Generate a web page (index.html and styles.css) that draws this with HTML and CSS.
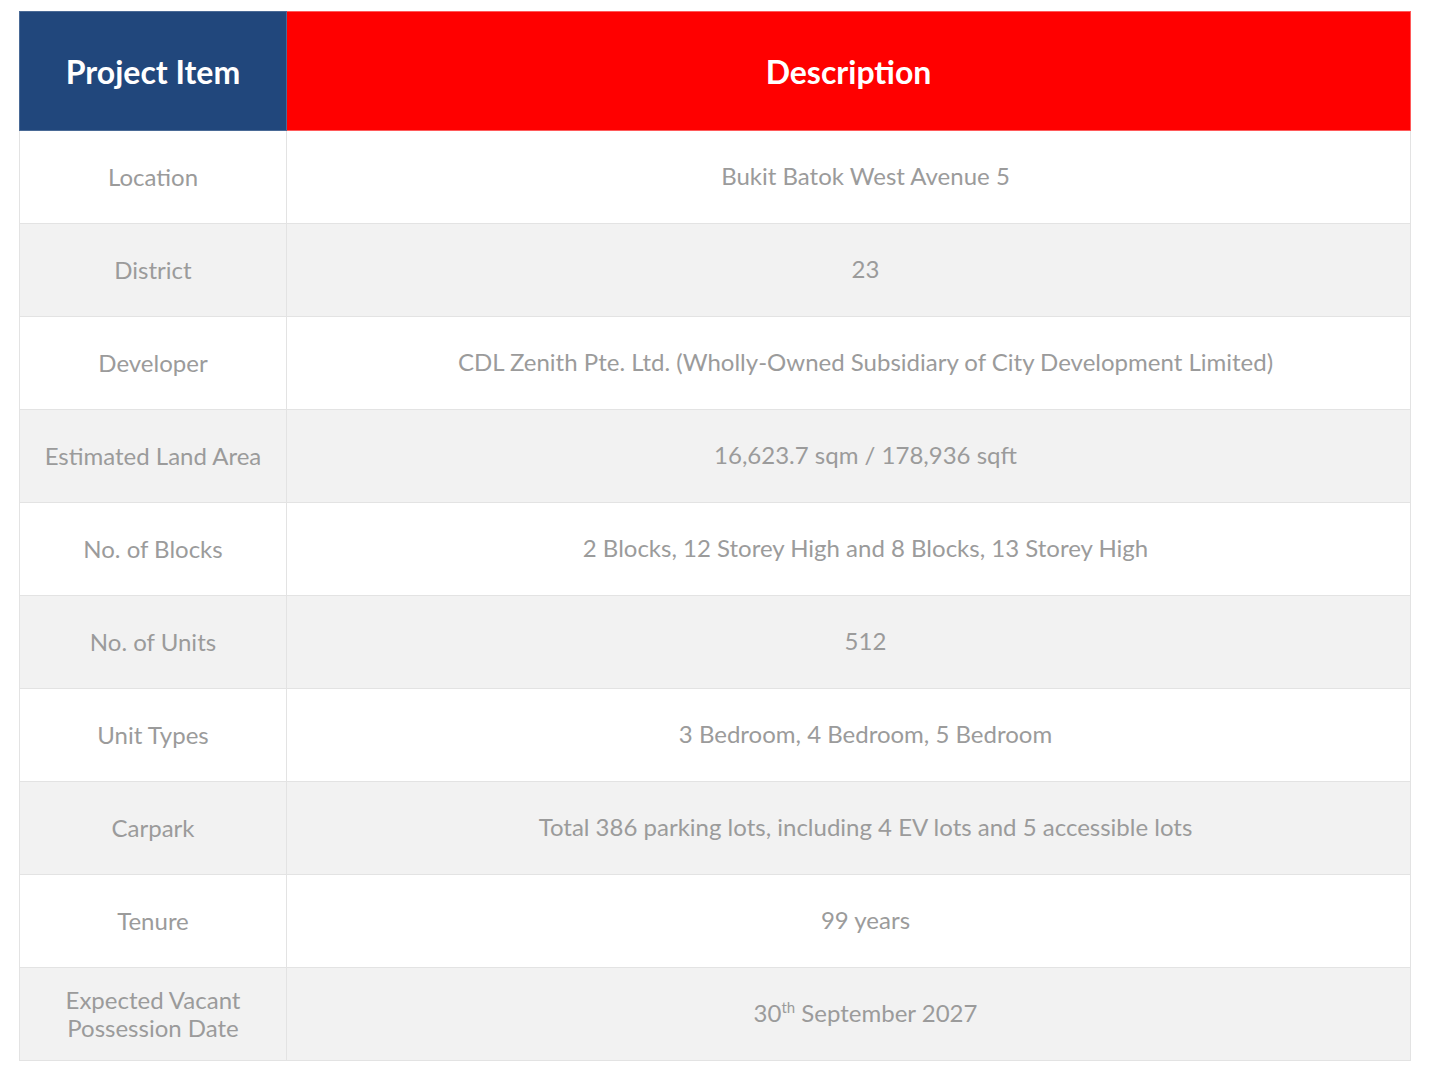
FILE: index.html
```html
<!DOCTYPE html>
<html>
<head>
<meta charset="utf-8">
<link rel="stylesheet" href="styles.css">
</head>
<body>
<div class="wrap">
<table class="details">
  <thead>
    <tr>
      <th class="col-item">Project Item</th>
      <th class="col-desc">Description</th>
    </tr>
  </thead>
  <tbody>
    <tr><td class="item">Location</td><td class="desc">Bukit Batok West Avenue 5</td></tr>
    <tr><td class="item">District</td><td class="desc">23</td></tr>
    <tr><td class="item">Developer</td><td class="desc">CDL Zenith Pte. Ltd. (Wholly-Owned Subsidiary of City Development Limited)</td></tr>
    <tr><td class="item">Estimated Land Area</td><td class="desc">16,623.7 sqm / 178,936 sqft</td></tr>
    <tr><td class="item">No. of Blocks</td><td class="desc">2 Blocks, 12 Storey High and 8 Blocks, 13 Storey High</td></tr>
    <tr><td class="item">No. of Units</td><td class="desc">512</td></tr>
    <tr><td class="item">Unit Types</td><td class="desc">3 Bedroom, 4 Bedroom, 5 Bedroom</td></tr>
    <tr><td class="item">Carpark</td><td class="desc">Total 386 parking lots, including 4 EV lots and 5 accessible lots</td></tr>
    <tr><td class="item">Tenure</td><td class="desc">99 years</td></tr>
    <tr><td class="item">Expected Vacant<br>Possession Date</td><td class="desc">30<sup>th</sup> September 2027</td></tr>
  </tbody>
</table>
</div>
</body>
</html>
```

FILE: styles.css
```css
html, body {
  margin: 0;
  padding: 0;
  background: #ffffff;
}
.wrap {
  padding: 11px 0 0 19px;
}
.details {
  width: 1392px;
  border-collapse: collapse;
  font-family: Lato, "Open Sans", sans-serif;
  table-layout: fixed;
}
.details th {
  height: 118px;
  padding: 0;
  color: #ffffff;
  font-weight: 700;
  font-size: 32px;
  text-align: center;
  vertical-align: middle;
}
.details th.col-item {
  width: 266px;
  background: #21477c;
  border: 1px solid #4a6a96;
}
.details th.col-desc {
  background: #ff0000;
  border: 1px solid #ff5a5a;
}
.details td {
  height: 92px;
  padding: 0;
  border: 1px solid #e3e3e3;
  color: #9b9b9b;
  font-size: 24px;
  font-weight: 400;
  line-height: 28px;
  text-align: center;
  vertical-align: middle;
}
.details td.desc {
  height: 89px;
  padding: 0 0 3px 34px;
}
.details tbody tr:nth-child(even) td {
  background: #f2f2f2;
}
.details sup {
  font-size: 15px;
  line-height: 0;
  vertical-align: 9px;
}
```
